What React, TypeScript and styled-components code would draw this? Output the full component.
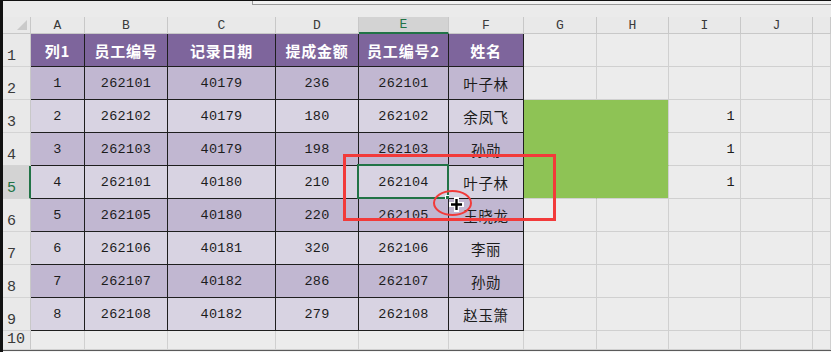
import React from "react";
import styled, { createGlobalStyle, css } from "styled-components";

const GREEN = "#217346";
const GRID = "#d0d0d0";
const FILL = "#8ec355";
const RED = "#f23a3a";

const GlobalStyle = createGlobalStyle`
  html, body { margin: 0; padding: 0; background: #ebebeb; overflow: hidden; }
  * { box-sizing: border-box; }
`;

const COLS = [54, 83, 108, 83, 90, 75, 73, 72, 72, 72];
const LETTERS = ["A", "B", "C", "D", "E", "F", "G", "H", "I", "J", ""];

type Row = [number, number, number, number, number, string];
const ROWS: Row[] = [
  [1, 262101, 40179, 236, 262101, "叶子林"],
  [2, 262102, 40179, 180, 262102, "余凤飞"],
  [3, 262103, 40179, 198, 262103, "孙勋"],
  [4, 262101, 40180, 210, 262104, "叶子林"],
  [5, 262105, 40180, 220, 262105, "王晓龙"],
  [6, 262106, 40181, 320, 262106, "李丽"],
  [7, 262107, 40182, 286, 262107, "孙勋"],
  [8, 262108, 40182, 279, 262108, "赵玉箫"],
];
const HEADS = ["列1", "员工编号", "记录日期", "提成金额", "员工编号2", "姓名"];

const Window = styled.div`
  position: relative;
  width: 831px;
  height: 352px;
  border-top: 1px solid #111;
  border-left: 3px solid #111;
  background: #ebebeb;
  display: flex;
  flex-direction: column;
`;

const TopStrip = styled.div`
  height: 16px;
  display: flex;
`;

const FormulaBox = styled.div`
  margin-left: 249px;
  flex: 1;
  height: 4px;
  border-left: 1px solid #9a9a9a;
  border-bottom: 1px solid #9a9a9a;
  background: #f2f2f2;
`;

const Sheet = styled.div`
  display: grid;
  grid-template-columns: 28px ${COLS.map((c) => `${c}px`).join(" ")} 1fr;
  grid-template-rows: 17px repeat(9, 33px) 19px;
`;

const Corner = styled.div`
  position: relative;
  background: #e9e9e9;
  border-right: 1px solid #c8c8c8;
  border-bottom: 1px solid #c8c8c8;
  &::after {
    content: "";
    position: absolute;
    right: 3px;
    bottom: 3px;
    border-style: solid;
    border-width: 0 0 10px 10px;
    border-color: transparent transparent #cacaca transparent;
  }
`;

const ColHead = styled.div<{ $active?: boolean }>`
  display: flex;
  align-items: center;
  justify-content: center;
  font-family: "Liberation Mono", monospace;
  font-size: 13px;
  color: #3a3a3a;
  background: #e9e9e9;
  border-right: 1px solid #c8c8c8;
  border-bottom: 1px solid #c8c8c8;
  ${(p) =>
    p.$active &&
    css`
      background: #d3d3d3;
      color: ${GREEN};
      border-bottom: 2px solid ${GREEN};
    `}
`;

const RowHead = styled.div<{ $active?: boolean }>`
  display: flex;
  align-items: flex-end;
  padding: 0 0 2px 4px;
  font-family: "Liberation Mono", monospace;
  font-size: 15px;
  line-height: 1;
  color: #3a3a3a;
  background: #e9e9e9;
  border-right: 1px solid #c8c8c8;
  border-bottom: 1px solid #d4d4d4;
  ${(p) =>
    p.$active &&
    css`
      background: #d3d3d3;
      color: ${GREEN};
      border-right: 2px solid ${GREEN};
    `}
`;

type Kind = "head" | "dark" | "light" | "blank" | "fill";

const bgFor: Record<Kind, string> = {
  head: "#7e659c",
  dark: "#c1b7d1",
  light: "#d8d3e2",
  blank: "#ececec",
  fill: FILL,
};

const Cell = styled.div<{
  $kind: Kind;
  $align?: "center" | "right";
  $openR?: boolean;
  $openB?: boolean;
}>`
  position: relative;
  display: flex;
  align-items: center;
  justify-content: ${(p) => (p.$align === "right" ? "flex-end" : "center")};
  padding: ${(p) => (p.$align === "right" ? "0 5px 0 0" : "0")};
  background: ${(p) => bgFor[p.$kind]};
  font-family: "Liberation Mono", "Noto Sans CJK SC", monospace;
  font-size: 13.5px;
  letter-spacing: 0.3px;
  color: #1c1c1c;
  white-space: nowrap;
  ${(p) => {
    const table = p.$kind === "head" || p.$kind === "dark" || p.$kind === "light";
    const base = table ? "#1e1e1e" : GRID;
    return css`
      border-right: 1px solid ${p.$openR ? FILL : base};
      border-bottom: 1px solid ${p.$openB ? FILL : base};
    `;
  }}
  ${(p) =>
    p.$kind === "head" &&
    css`
      font-family: "Noto Sans CJK SC", sans-serif;
      font-weight: 700;
      font-size: 15px;
      letter-spacing: 0.8px;
      color: #ffffff;
    `}
`;

const CjkText = styled.span`
  font-family: "Noto Sans CJK SC", sans-serif;
  font-size: 14.5px;
  letter-spacing: 0.6px;
`;

const Selection = styled.div`
  position: absolute;
  left: -2px;
  top: -2px;
  right: -1px;
  bottom: -1px;
  border: 2px solid ${GREEN};
  pointer-events: none;
`;

const FillHandle = styled.div`
  position: absolute;
  right: -5px;
  bottom: -5px;
  width: 7px;
  height: 7px;
  background: ${GREEN};
  border: 1px solid #ffffff;
`;

const BottomBar = styled.div`
  flex: 1;
  border-top: 1px solid #5a5a5a;
  background: #f4f4f4;
`;

const RedBox = styled.div`
  position: absolute;
  left: 340px;
  top: 153px;
  width: 213px;
  height: 67px;
  border: 3px solid ${RED};
  pointer-events: none;
`;

const RedRing = styled.div`
  position: absolute;
  left: 430px;
  top: 189px;
  width: 39px;
  height: 26px;
  border: 2px solid ${RED};
  border-radius: 50%;
  pointer-events: none;
`;

const CursorWrap = styled.div`
  position: absolute;
  left: 446px;
  top: 196px;
  width: 15px;
  height: 15px;
  line-height: 0;
`;

function Cursor() {
  return (
    <CursorWrap>
      <svg width="15" height="15" viewBox="0 0 15 15">
        <path d="M7.5 1.5 V13.5 M1.5 7.5 H13.5" stroke="#ffffff" strokeWidth="5" strokeLinecap="square" />
        <path d="M7.5 2 V13 M2 7.5 H13" stroke="#000000" strokeWidth="2.4" strokeLinecap="butt" />
      </svg>
    </CursorWrap>
  );
}

export default function App() {
  const cells: React.ReactNode[] = [];
  cells.push(<Corner key="corner" />);
  LETTERS.forEach((l, i) => cells.push(<ColHead key={`ch${i}`} $active={l === "E"}>{l}</ColHead>));

  for (let r = 1; r <= 10; r++) {
    cells.push(<RowHead key={`rh${r}`} $active={r === 5}>{r}</RowHead>);
    for (let c = 0; c < 11; c++) {
      const key = `c${r}-${c}`;
      if (c < 6 && r <= 9) {
        if (r === 1) {
          cells.push(<Cell key={key} $kind="head">{HEADS[c]}</Cell>);
        } else {
          const row = ROWS[r - 2];
          const kind: Kind = (r - 2) % 2 === 0 ? "dark" : "light";
          const v = row[c];
          cells.push(
            <Cell key={key} $kind={kind}>
              {typeof v === "string" ? <CjkText>{v}</CjkText> : v}
              {r === 5 && c === 4 && (
                <Selection>
                  <FillHandle />
                </Selection>
              )}
            </Cell>
          );
        }
      } else if ((c === 6 || c === 7) && r >= 3 && r <= 5) {
        cells.push(<Cell key={key} $kind="fill" $openR={c === 6} $openB={r < 5} />);
      } else if (c === 8 && r >= 3 && r <= 5) {
        cells.push(<Cell key={key} $kind="blank" $align="right">1</Cell>);
      } else {
        cells.push(<Cell key={key} $kind="blank" />);
      }
    }
  }

  return (
    <>
      <GlobalStyle />
      <Window>
        <TopStrip>
          <FormulaBox />
        </TopStrip>
        <Sheet>{cells}</Sheet>
        <BottomBar />
        <RedBox />
        <RedRing />
        <Cursor />
      </Window>
    </>
  );
}
